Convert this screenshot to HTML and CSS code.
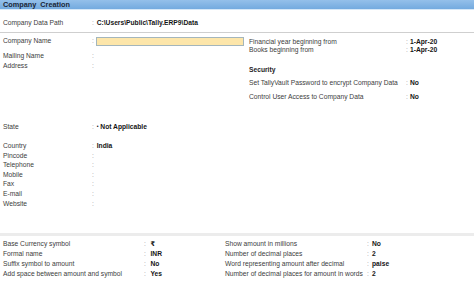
FILE: index.html
```html
<!DOCTYPE html>
<html>
<head>
<meta charset="utf-8">
<title>Company Creation</title>
<link rel="stylesheet" href="styles.css">
</head>
<body>
<div class="page">
  <div class="title">Company&nbsp;&nbsp;Creation</div>
  <div class="path-row">
    <span class="lbl">Company Data Path</span><span class="colon">:</span><span class="val">C:\Users\Public\Tally.ERP9\Data</span>
  </div>
  <div class="main">
    <div class="left">
      <div class="lrow name-row"><span class="lbl">Company Name</span><span class="colon">:</span><span class="input"></span></div>
      <div class="lrow mailing"><span class="lbl">Mailing Name</span><span class="colon">:</span><span></span></div>
      <div class="lrow"><span class="lbl">Address</span><span class="colon">:</span><span></span></div>
      <div class="lrow state"><span class="lbl">State</span><span class="colon">:</span><span class="val"><span class="bullet">&#8226;</span> Not Applicable</span></div>
      <div class="contact">
        <div class="crow"><span class="lbl">Country</span><span class="colon">:</span><span class="val">India</span></div>
        <div class="crow"><span class="lbl">Pincode</span><span class="colon">:</span><span></span></div>
        <div class="crow"><span class="lbl">Telephone</span><span class="colon">:</span><span></span></div>
        <div class="crow"><span class="lbl">Mobile</span><span class="colon">:</span><span></span></div>
        <div class="crow"><span class="lbl">Fax</span><span class="colon">:</span><span></span></div>
        <div class="crow"><span class="lbl">E-mail</span><span class="colon">:</span><span></span></div>
        <div class="crow"><span class="lbl">Website</span><span class="colon">:</span><span></span></div>
      </div>
    </div>
    <div class="right">
      <div class="rrow fy"><span class="lbl">Financial year beginning from</span><span class="colon">:</span><span class="val">1-Apr-20</span></div>
      <div class="rrow fy"><span class="lbl">Books beginning from</span><span class="colon">:</span><span class="val">1-Apr-20</span></div>
      <div class="sec-title">Security</div>
      <div class="rrow sec"><span class="lbl">Set TallyVault Password to encrypt Company Data</span><span class="colon">:</span><span class="val">No</span></div>
      <div class="rrow sec sec2"><span class="lbl">Control User Access to Company Data</span><span class="colon">:</span><span class="val">No</span></div>
    </div>
  </div>
  <div class="bottom">
    <div class="bleft">
      <div class="brow"><span class="lbl">Base Currency symbol</span><span class="colon">:</span><span class="val">&#8377;</span></div>
      <div class="brow"><span class="lbl">Formal name</span><span class="colon">:</span><span class="val">INR</span></div>
      <div class="brow"><span class="lbl">Suffix symbol to amount</span><span class="colon">:</span><span class="val">No</span></div>
      <div class="brow"><span class="lbl">Add space between amount and symbol</span><span class="colon">:</span><span class="val">Yes</span></div>
    </div>
    <div class="bright">
      <div class="brow2"><span class="lbl">Show amount in millions</span><span class="colon">:</span><span class="val">No</span></div>
      <div class="brow2"><span class="lbl">Number of decimal places</span><span class="colon">:</span><span class="val">2</span></div>
      <div class="brow2"><span class="lbl">Word representing amount after decimal</span><span class="colon">:</span><span class="val">paise</span></div>
      <div class="brow2"><span class="lbl">Number of decimal places for amount in words</span><span class="colon">:</span><span class="val">2</span></div>
    </div>
  </div>
</div>
</body>
</html>
```
FILE: styles.css
```css
html, body {
  margin: 0;
  padding: 0;
  background: #ffffff;
}
body {
  font-family: "Liberation Sans", Arial, "DejaVu Sans", sans-serif;
  font-size: 6.7px;
  color: #3c3c3c;
}
.page {
  width: 474px;
  height: 285px;
  display: flex;
  flex-direction: column;
  overflow: hidden;
}
.title {
  height: 9px;
  line-height: 9px;
  padding-left: 3px;
  font-size: 7.3px;
  font-weight: bold;
  color: #1a2636;
  background: linear-gradient(#94c0ea, #74aadf);
  border-bottom: 1px solid #d6e8f8;
  white-space: nowrap;
}
.lbl { white-space: nowrap; }
.colon { color: #a0a0a0; }
.val {
  font-weight: bold;
  color: #141414;
  white-space: nowrap;
}
.path-row {
  display: grid;
  grid-template-columns: 89px 4.7px auto;
  padding: 8px 0 4px 3px;
  line-height: 10px;
  border-bottom: 1px solid #cfcfcf;
}
.main {
  flex: 1;
  display: flex;
}
.left {
  width: 249px;
  padding-top: 3px;
}
.lrow, .crow {
  display: grid;
  grid-template-columns: 89px 4.7px auto;
  padding-left: 3px;
  line-height: 10px;
  height: 10px;
}
.input {
  display: block;
  margin-top: 1px;
  width: 146px;
  height: 7px;
  background: #fde6aa;
  border: 1px solid #a4b6bc;
  margin-left: -1px;
}
.mailing { margin-top: 5px; }
.state { margin-top: 51px; }
.bullet {
  font-size: 5px;
  position: relative;
  top: -1px;
}
.contact { margin-top: 9px; }
.crow {
  height: 9.6px;
  line-height: 9.6px;
}
.right {
  flex: 1;
  padding-top: 5px;
}
.rrow {
  display: grid;
  grid-template-columns: 157px 4px auto;
  line-height: 8px;
  height: 8px;
}
.sec-title {
  margin-top: 11px;
  line-height: 10px;
  font-weight: bold;
  color: #1e1e1e;
}
.rrow.sec {
  margin-top: 2.5px;
  line-height: 10px;
  height: 10px;
}
.rrow.sec2 { margin-top: 4px; }
.bottom {
  height: 46px;
  border-top: 3px solid #ececec;
  padding-top: 3px;
  display: flex;
}
.bleft {
  width: 222px;
  padding-left: 3px;
}
.brow {
  display: grid;
  grid-template-columns: 141px 6.5px auto;
  line-height: 10px;
  height: 10px;
}
.bright { flex: 1; }
.brow2 {
  display: grid;
  grid-template-columns: 142px 5px auto;
  line-height: 10px;
  height: 10px;
}
```
